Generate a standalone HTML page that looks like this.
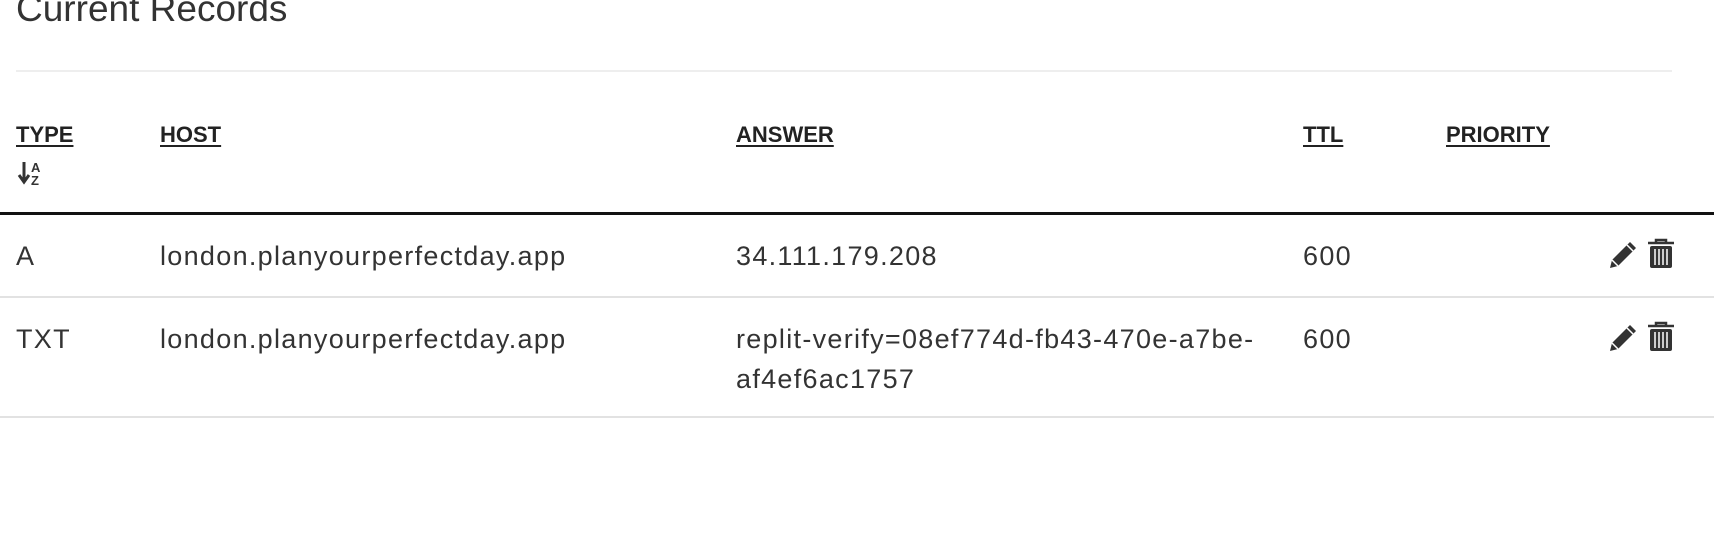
<!DOCTYPE html>
<html><head><meta charset="utf-8"><style>
body{margin:0;width:1714px;height:540px;background:#fff;font-family:"Liberation Sans",sans-serif;color:#333;position:relative;overflow:hidden}
.a{position:absolute;white-space:nowrap}
h1{position:absolute;margin:0;left:16px;top:-13px;font-size:37px;font-weight:normal;color:#333;line-height:44px;letter-spacing:0}
.hd{font-size:22px;font-weight:bold;text-decoration:underline;text-decoration-thickness:2px;text-underline-offset:3px;color:#222;top:122px}
.c{font-size:27px;line-height:40px;letter-spacing:1.3px}
.ln{position:absolute;left:0;width:1714px}
</style></head><body>
<h1>Current Records</h1>
<div class="ln" style="left:16px;width:1656px;top:70px;height:2px;background:#eee"></div>
<div class="a hd" style="left:16px">TYPE</div>
<div class="a hd" style="left:160px">HOST</div>
<div class="a hd" style="left:736px">ANSWER</div>
<div class="a hd" style="left:1303px">TTL</div>
<div class="a hd" style="left:1446px">PRIORITY</div>
<svg class="a" style="left:17px;top:160px" width="30" height="26" viewBox="0 0 30 26"><path d="M7 2v18M2 15l5 7 5-7" stroke="#333" stroke-width="3" fill="none"/><text x="14" y="12" font-size="13" font-weight="bold" fill="#333" font-family="Liberation Sans">A</text><text x="14" y="25" font-size="13" font-weight="bold" fill="#333" font-family="Liberation Sans">Z</text></svg>
<div class="ln" style="top:212px;height:3px;background:#111"></div>
<div class="a c" style="left:16px;top:236px">A</div>
<div class="a c" style="left:160px;top:236px">london.planyourperfectday.app</div>
<div class="a c" style="left:736px;top:236px">34.111.179.208</div>
<div class="a c" style="left:1303px;top:236px">600</div>
<div class="ln" style="top:296px;height:2px;background:#e2e2e2"></div>
<div class="a c" style="left:16px;top:319px">TXT</div>
<div class="a c" style="left:160px;top:319px">london.planyourperfectday.app</div>
<div class="a c" style="left:736px;top:319px">replit-verify=08ef774d-fb43-470e-a7be-<br>af4ef6ac1757</div>
<div class="a c" style="left:1303px;top:319px">600</div>
<div class="ln" style="top:416px;height:2px;background:#e2e2e2"></div>
<svg class="a" style="left:1608px;top:238px" width="70" height="32" viewBox="0 0 70 32"><path d="M2 30l2-8 18-18 6 6-18 18z" fill="#333"/><path d="M4 22l6 6" stroke="#fff" stroke-width="1.5"/><path d="M19 7l6 6" stroke="#fff" stroke-width="1.5"/><path d="M40 5h26M48 5V2h10v3" stroke="#333" stroke-width="2.5" fill="none"/><rect x="42" y="8" width="22" height="22" rx="2" fill="#333"/><path d="M47 11v16M51 11v16M55 11v16M59 11v16" stroke="#fff" stroke-width="1.5"/></svg>
<svg class="a" style="left:1608px;top:321px" width="70" height="32" viewBox="0 0 70 32"><path d="M2 30l2-8 18-18 6 6-18 18z" fill="#333"/><path d="M4 22l6 6" stroke="#fff" stroke-width="1.5"/><path d="M19 7l6 6" stroke="#fff" stroke-width="1.5"/><path d="M40 5h26M48 5V2h10v3" stroke="#333" stroke-width="2.5" fill="none"/><rect x="42" y="8" width="22" height="22" rx="2" fill="#333"/><path d="M47 11v16M51 11v16M55 11v16M59 11v16" stroke="#fff" stroke-width="1.5"/></svg>
</body></html>
